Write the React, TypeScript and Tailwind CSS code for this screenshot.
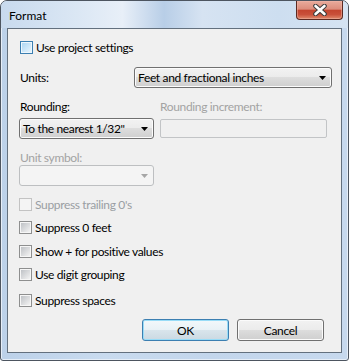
const font = "font-['Lato','Liberation_Sans',sans-serif] text-[12px] leading-[15px] tracking-[-0.35px]";

type BoxState = 'normal' | 'hot' | 'disabled';

const CheckBox = ({ state = 'normal' }: { state?: BoxState }) => {
  if (state === 'disabled') {
    return <div className="w-[13px] h-[13px] border border-[#c3c3c3] bg-[#f4f4f4]"></div>;
  }
  const outer = state === 'hot' ? 'border-[#3c7fb1] bg-[#eef7fd]' : 'border-[#8e8f8f] bg-[#f6f6f6]';
  const inner =
    state === 'hot'
      ? 'bg-linear-to-br from-[#aed7f3] to-[#e6f4fd]'
      : 'bg-linear-to-br from-[#bfc2c6] to-[#f3f3f3]';
  return (
    <div className={`w-[13px] h-[13px] border ${outer} flex items-center justify-center`}>
      <div className={`w-[9px] h-[9px] ${inner}`}></div>
    </div>
  );
};

const CheckRow = ({ label, state = 'normal', className = '' }: { label: string; state?: BoxState; className?: string }) => (
  <div className={`flex items-center h-[13px] ${className}`}>
    <CheckBox state={state} />
    <span className={`ml-[3px] ${state === 'disabled' ? 'text-[#9a9ea3]' : 'text-black'}`}>{label}</span>
  </div>
);

const Arrow = ({ color = '#000' }: { color?: string }) => (
  <svg width="7" height="4" viewBox="0 0 7 4">
    <path d="M0 0H7L3.5 4Z" fill={color} />
  </svg>
);

const Dropdown = ({ value, className = '', disabled = false }: { value?: string; className?: string; disabled?: boolean }) => {
  if (disabled) {
    return (
      <div className={`h-[21px] border border-[#bdbfc1] rounded-[3px] bg-[#f4f4f4] flex items-center justify-end pr-[5px] ${className}`}>
        <Arrow color="#a6a6a6" />
      </div>
    );
  }
  return (
    <div
      className={`h-[21px] border border-[#707070] rounded-[3px] bg-[linear-gradient(180deg,#f2f2f2_0%,#ebebeb_50%,#dddddd_50%,#cfcfcf_100%)] shadow-[inset_0_0_0_1px_#fcfcfc] flex items-center pl-[3px] pr-[5px] ${className}`}
    >
      <span className="flex-1 text-black whitespace-nowrap">{value}</span>
      <Arrow />
    </div>
  );
};

const Button = ({ label, isDefault = false }: { label: string; isDefault?: boolean }) => (
  <div
    className={`w-[87px] h-[22px] rounded-[3px] border flex items-center justify-center text-black ${
      isDefault
        ? 'border-[#3c7fb1] shadow-[inset_0_0_0_1px_#98dcf7] bg-[linear-gradient(180deg,#f2f8fb_0%,#e8f1f6_50%,#d9e5ec_50%,#cbd9e2_100%)]'
        : 'border-[#707070] shadow-[inset_0_0_0_1px_#fbfbfb] bg-[linear-gradient(180deg,#f2f2f2_0%,#ebebeb_50%,#dddddd_50%,#cfcfcf_100%)]'
    }`}
  >
    {label}
  </div>
);

const CloseButton = () => (
  <div className="w-[47px] h-[19px] rounded-b-[4px] border border-t-0 border-[#5c2a22] bg-[linear-gradient(180deg,#e9ab9c_0%,#dc8d7c_45%,#c4452f_52%,#c9503a_75%,#e08a6c_100%)] shadow-[inset_0_0_0_1px_#efb7aa80] flex items-center justify-center">
    <svg width="14" height="12" viewBox="0 0 14 12">
      <path d="M2.5 2L11.5 10M11.5 2L2.5 10" stroke="#3b3b3b" strokeWidth="4.6" strokeLinecap="round" />
      <path d="M2.5 2L11.5 10M11.5 2L2.5 10" stroke="#ffffff" strokeWidth="2.6" strokeLinecap="round" />
    </svg>
  </div>
);

export default function App() {
  return (
    <div className={`w-[349px] h-[361px] bg-white ${font}`}>
      <div className="w-[349px] h-[361px] border border-[#4d5560] rounded-t-[7px] rounded-b-[3px] bg-[linear-gradient(90deg,#bcd1e9_0%,#c9dbef_30%,#c3d6ec_60%,#c7d9ee_100%)] shadow-[inset_0_0_0_1px_#e6eef8] flex flex-col px-[6px] pb-[7px]">
        {/* title bar */}
        <div className="h-[27px] -mx-[6px] px-[8px] pr-[5px] flex items-start justify-between rounded-t-[6px] bg-[linear-gradient(90deg,#c8daee_0%,#dbe7f4_22%,#e8eff8_35%,#b8cee7_47%,#d6e3f2_58%,#cddef0_80%,#d5e3f2_100%)]">
          <span className="text-black mt-[7px] tracking-normal">Format</span>
          <CloseButton />
        </div>

        {/* client area */}
        <div className="flex-1 border border-[#63707e] bg-[#f0f0f0] flex flex-col pl-[11px]">
          <CheckRow label="Use project settings" state="hot" className="mt-[12px] ml-[1px]" />

          <div className="flex items-center mt-[13px]">
            <span className="w-[115px] pl-[1px]">Units:</span>
            <Dropdown value="Feet and fractional inches" className="w-[198px]" />
          </div>

          <div className="flex mt-[11px] h-[15px]">
            <span className="w-[141px] pl-[1px]">Rounding:</span>
            <span className="text-[#a3a3a3]">Rounding increment:</span>
          </div>

          <div className="flex items-center mt-[4px]">
            <Dropdown value={'To the nearest 1/32"'} className="w-[135px]" />
            <div className="ml-[6px] w-[167px] h-[19px] border border-[#c2c4c6] rounded-[2px] bg-[#f0f0f0]"></div>
          </div>

          <span className="mt-[12px] h-[14px] leading-[14px] pl-[1px] text-[#a3a3a3]">Unit symbol:</span>
          <Dropdown disabled className="w-[135px]" />

          <CheckRow label="Suppress trailing 0's" state="disabled" className="mt-[12px]" />
          <CheckRow label="Suppress 0 feet" className="mt-[10px]" />
          <CheckRow label="Show + for positive values" className="mt-[11px]" />
          <CheckRow label="Use digit grouping" className="mt-[10px]" />
          <CheckRow label="Suppress spaces" className="mt-[13px]" />

          <div className="flex justify-end gap-[8px] pr-[17px] mt-[12px]">
            <Button label="OK" isDefault />
            <Button label="Cancel" />
          </div>
        </div>
      </div>
    </div>
  );
}
